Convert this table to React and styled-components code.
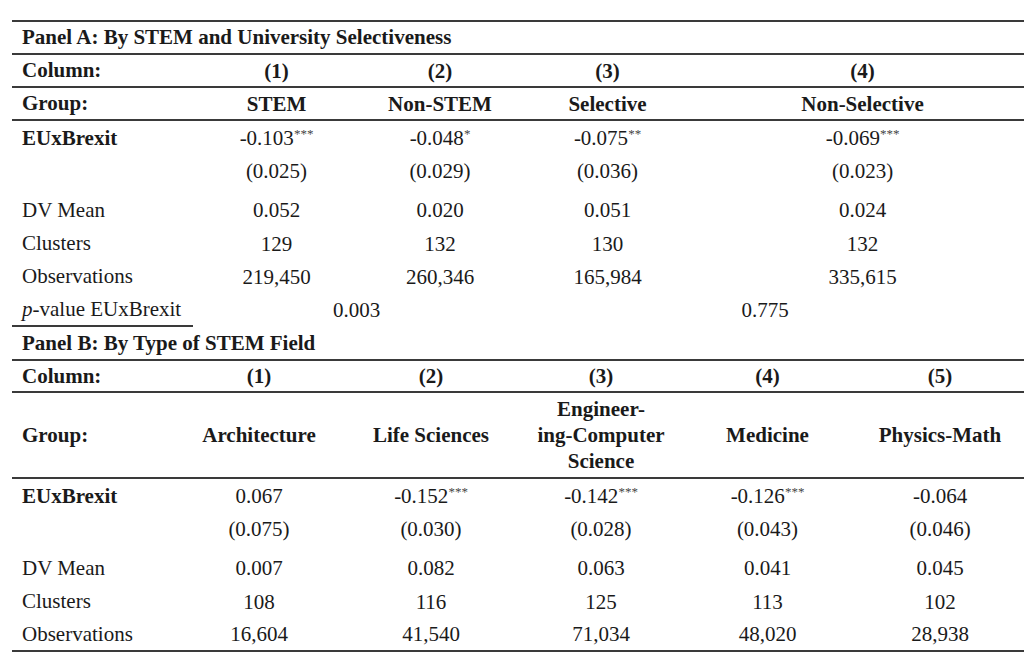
import React from 'react'
import styled, { createGlobalStyle } from 'styled-components'

const Global = createGlobalStyle`
  html, body { margin: 0; padding: 0; background: #fff; overflow: hidden; }
  body { font-family: "Liberation Serif", "Times New Roman", serif; color: #1a1a1a; }
`;

const Page = styled.div`
  padding: 20px 0 0 12px;
  width: 1018px;
`;

const Panel = styled.table`
  width: 100%;
  border-collapse: collapse;
  table-layout: fixed;
  font-size: 21px;
  ${({ $top }) => $top && 'border-top: 2px solid #3a3a3a;'}
  ${({ $bottom }) => $bottom && 'border-bottom: 2px solid #3a3a3a;'}
`;

const Row = styled.tr`
  height: ${({ $h }) => $h}px;
  ${({ $rule }) => $rule && 'border-bottom: 2px solid #3a3a3a;'}
`;

const Label = styled.td`
  text-align: left;
  padding: 0 0 0 10px;
  white-space: nowrap;
  font-weight: ${({ $bold }) => ($bold ? 700 : 400)};
  ${({ $under }) => $under && 'border-bottom: 2px solid #3a3a3a;'}
  vertical-align: middle;
`;

const Cell = styled.td`
  text-align: center;
  padding: ${({ $top }) => ($top ? 3 : 0)}px ${({ $shift }) => $shift || 0}px 0 0;
  white-space: nowrap;
  font-weight: ${({ $bold }) => ($bold ? 700 : 400)};
  vertical-align: ${({ $top }) => ($top ? 'top' : 'middle')};
  line-height: 26px;
`;

const Stars = styled.sup`
  font-size: 13px;
  color: #444;
  vertical-align: 7px;
  line-height: 0;
`;

const Italic = styled.i`
  font-style: italic;
`;

const Coef = ({ v, s }) => (
  <>
    {v}
    {s && <Stars>{s}</Stars>}
  </>
)

const panelA = {
  cols: [181, 167, 160, 175, 335],
  groups: ['STEM', 'Non-STEM', 'Selective', 'Non-Selective'],
  coef: [['-0.103', '***'], ['-0.048', '*'], ['-0.075', '**'], ['-0.069', '***']],
  se: ['(0.025)', '(0.029)', '(0.036)', '(0.023)'],
  mean: ['0.052', '0.020', '0.051', '0.024'],
  clusters: ['129', '132', '130', '132'],
  obs: ['219,450', '260,346', '165,984', '335,615'],
}

const panelB = {
  cols: [161, 172, 172, 168, 165, 180],
  groups: [['Architecture'], ['Life Sciences'], ['Engineer-', 'ing-Computer', 'Science'], ['Medicine'], ['Physics-Math']],
  coef: [['0.067'], ['-0.152', '***'], ['-0.142', '***'], ['-0.126', '***'], ['-0.064']],
  se: ['(0.075)', '(0.030)', '(0.028)', '(0.043)', '(0.046)'],
  mean: ['0.007', '0.082', '0.063', '0.041', '0.045'],
  clusters: ['108', '116', '125', '113', '102'],
  obs: ['16,604', '41,540', '71,034', '48,020', '28,938'],
}

const Cols = ({ widths }) => (
  <colgroup>
    {widths.map((w, i) => <col key={i} style={{ width: w }} />)}
  </colgroup>
)

const DataRows = ({ d }) => (
  <>
    <Row $h={35}>
      <Label $bold>EUxBrexit</Label>
      {d.coef.map(([v, s], i) => <Cell key={i}><Coef v={v} s={s} /></Cell>)}
    </Row>
    <Row $h={38}>
      <Label />
      {d.se.map((v, i) => <Cell key={i} $top>{v}</Cell>)}
    </Row>
    <Row $h={34}>
      <Label>DV Mean</Label>
      {d.mean.map((v, i) => <Cell key={i}>{v}</Cell>)}
    </Row>
    <Row $h={33}>
      <Label>Clusters</Label>
      {d.clusters.map((v, i) => <Cell key={i}>{v}</Cell>)}
    </Row>
    <Row $h={33}>
      <Label>Observations</Label>
      {d.obs.map((v, i) => <Cell key={i}>{v}</Cell>)}
    </Row>
  </>
)

export default function App() {
  return (
    <Page>
      <Global />
      <Panel $top>
        <Cols widths={panelA.cols} />
        <tbody>
          <Row $h={33} $rule>
            <Label $bold colSpan={5}>Panel A: By STEM and University Selectiveness</Label>
          </Row>
          <Row $h={33} $rule>
            <Label $bold>Column:</Label>
            {[1, 2, 3, 4].map(n => <Cell key={n} $bold>({n})</Cell>)}
          </Row>
          <Row $h={33} $rule>
            <Label $bold>Group:</Label>
            {panelA.groups.map(g => <Cell key={g} $bold>{g}</Cell>)}
          </Row>
          <DataRows d={panelA} />
          <Row $h={33}>
            <Label $under><Italic>p</Italic>-value EUxBrexit</Label>
            <Cell colSpan={2}>0.003</Cell>
            <Cell colSpan={2} $shift={20}>0.775</Cell>
          </Row>
        </tbody>
      </Panel>
      <Panel $bottom>
        <Cols widths={panelB.cols} />
        <tbody>
          <Row $h={33} $rule>
            <Label $bold colSpan={6}>Panel B: By Type of STEM Field</Label>
          </Row>
          <Row $h={32} $rule>
            <Label $bold>Column:</Label>
            {[1, 2, 3, 4, 5].map(n => <Cell key={n} $bold>({n})</Cell>)}
          </Row>
          <Row $h={86} $rule>
            <Label $bold>Group:</Label>
            {panelB.groups.map((g, i) => (
              <Cell key={i} $bold>
                {g.map((line, j) => <div key={j}>{line}</div>)}
              </Cell>
            ))}
          </Row>
          <DataRows d={panelB} />
        </tbody>
      </Panel>
    </Page>
  )
}
